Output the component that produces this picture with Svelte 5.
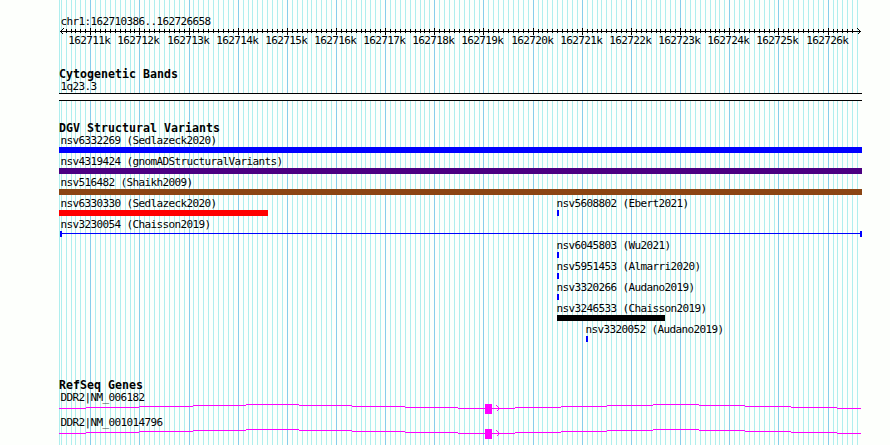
<script>
  const majors = Array.from({ length: 16 }, (_, i) => ({
    x: Math.floor(90.7 + i * 49.16),
    label: `${162711 + i}k`
  }));
  const minors = Array.from({ length: 163 }, (_, i) => i - 6)
    .filter((i) => i % 10 !== 0)
    .map((i) => Math.floor(90.7 + i * 4.916));

  const variants = [
    { id: 'nsv6332269', study: 'Sedlazeck2020', row: 0, x: 59, end: 862, color: '#0000ff' },
    { id: 'nsv4319424', study: 'gnomADStructuralVariants', row: 1, x: 59, end: 862, color: '#4b0082' },
    { id: 'nsv516482', study: 'Shaikh2009', row: 2, x: 59, end: 862, color: '#8b4513' },
    { id: 'nsv6330330', study: 'Sedlazeck2020', row: 3, x: 59, end: 268, color: '#ff0000' },
    { id: 'nsv5608802', study: 'Ebert2021', row: 3, x: 557, end: 559, color: '#0000ff' },
    { id: 'nsv3230054', study: 'Chaisson2019', row: 4, x: 60, end: 862, span: true },
    { id: 'nsv6045803', study: 'Wu2021', row: 5, x: 557, end: 559, color: '#0000ff' },
    { id: 'nsv5951453', study: 'Almarri2020', row: 6, x: 557, end: 559, color: '#0000ff' },
    { id: 'nsv3320266', study: 'Audano2019', row: 7, x: 557, end: 559, color: '#0000ff' },
    { id: 'nsv3246533', study: 'Chaisson2019', row: 8, x: 557, end: 665, color: '#000000' },
    { id: 'nsv3320052', study: 'Audano2019', row: 9, x: 586, end: 588, color: '#0000ff' }
  ];

  const genes = [
    { name: 'DDR2|NM_006182', y: 408 },
    { name: 'DDR2|NM_001014796', y: 433 }
  ];
  // Intron segments: start, end and rise above the exon line
  const introns = [
    [59, 86, 0], [86, 139, 1], [139, 193, 2], [193, 246, 3], [246, 299, 4],
    [299, 352, 3], [352, 405, 2], [405, 458, 1], [458, 515, 0],
    [515, 561, 1], [561, 607, 2], [607, 653, 3], [653, 699, 4],
    [699, 745, 3], [745, 791, 2], [791, 837, 1], [837, 861, 0]
  ];
  const labelX = (v) => (v.x < 100 ? 60.4 : v.x - 0.6);
</script>

<svg class="browser" width="890" height="445" viewBox="0 0 890 445">
  <g class="grid">
    <rect class="minor" x="59" y="0" width="1" height="445" />
    {#each minors as x}
      <rect class="minor" {x} y="0" width="1" height="445" />
    {/each}
    {#each majors as m}
      <rect class="major" x={m.x} y="0" width="1" height="445" />
    {/each}
  </g>

  <g class="ruler">
    <text x="60.4" y="25">chr1:162710386..162726658</text>
    <rect x="60" y="31" width="801" height="1" />
    <path d="M63.5 28.5L60.5 31.5L63.5 34.5M857.5 28.5L860.5 31.5L857.5 34.5" />
    {#each minors as x}
      {#if x > 62 && x < 857}<rect {x} y="29" width="1" height="4" />{/if}
    {/each}
    {#each majors as m}
      <rect x={m.x} y="28" width="1" height="7" />
      <text x={m.x - 21.7} y="44">{m.label}</text>
    {/each}
  </g>

  <g class="bands">
    <text class="title" x="59" y="78">Cytogenetic Bands</text>
    <text x="60.4" y="90">1q23.3</text>
    <rect x="59" y="93" width="803" height="8" />
    <rect class="inner" x="59" y="94" width="803" height="6" />
  </g>

  <g class="variants">
    <text class="title" x="59" y="132">DGV Structural Variants</text>
    {#each variants as v}
      <text x={labelX(v)} y={144 + v.row * 21}>{v.id} ({v.study})</text>
      {#if v.span}
        <g class="span">
          <rect x={v.x} y={149 + v.row * 21} width={v.end - v.x} height="1" />
          <rect x={v.x} y={147 + v.row * 21} width="2" height="6" />
          <rect x={v.end - 2} y={147 + v.row * 21} width="2" height="6" />
        </g>
      {:else}
        <rect x={v.x} y={147 + v.row * 21} width={v.end - v.x} height="6" fill={v.color} />
      {/if}
    {/each}
  </g>

  <g class="genes">
    <text class="title" x="59" y="389">RefSeq Genes</text>
    {#each genes as g}
      <text x="60.4" y={g.y - 7}>{g.name}</text>
      {#each introns as [start, end, rise]}
        <rect x={start} y={g.y - rise} width={end - start} height="1" />
      {/each}
      <rect x="485" y={g.y - 4} width="7" height="10" />
      <path d="M496.5 {g.y - 2.5}L499.5 {g.y + 0.5}L496.5 {g.y + 3.5}" />
    {/each}
  </g>
</svg>

<style>
  :global(body) {
    margin: 0;
    background: #fdfffc;
  }
  .browser {
    display: block;
    background: #fdfffc;
    shape-rendering: crispEdges;
  }
  text {
    font-family: 'DejaVu Sans Mono', monospace;
    font-size: 11px;
    letter-spacing: -0.622px;
    fill: #000;
    white-space: pre;
  }
  .title {
    font-size: 11.6px;
    font-weight: 700;
    letter-spacing: 0.016px;
  }
  .minor { fill: #afeeee; }
  .major { fill: #87ceeb; }
  .inner { fill: #fdfffc; }
  .span { fill: #0000ff; }
  path {
    fill: none;
    stroke: #000;
    stroke-width: 1;
  }
  .genes rect { fill: #ff00ff; }
  .genes path { stroke: #ff00ff; }
</style>
